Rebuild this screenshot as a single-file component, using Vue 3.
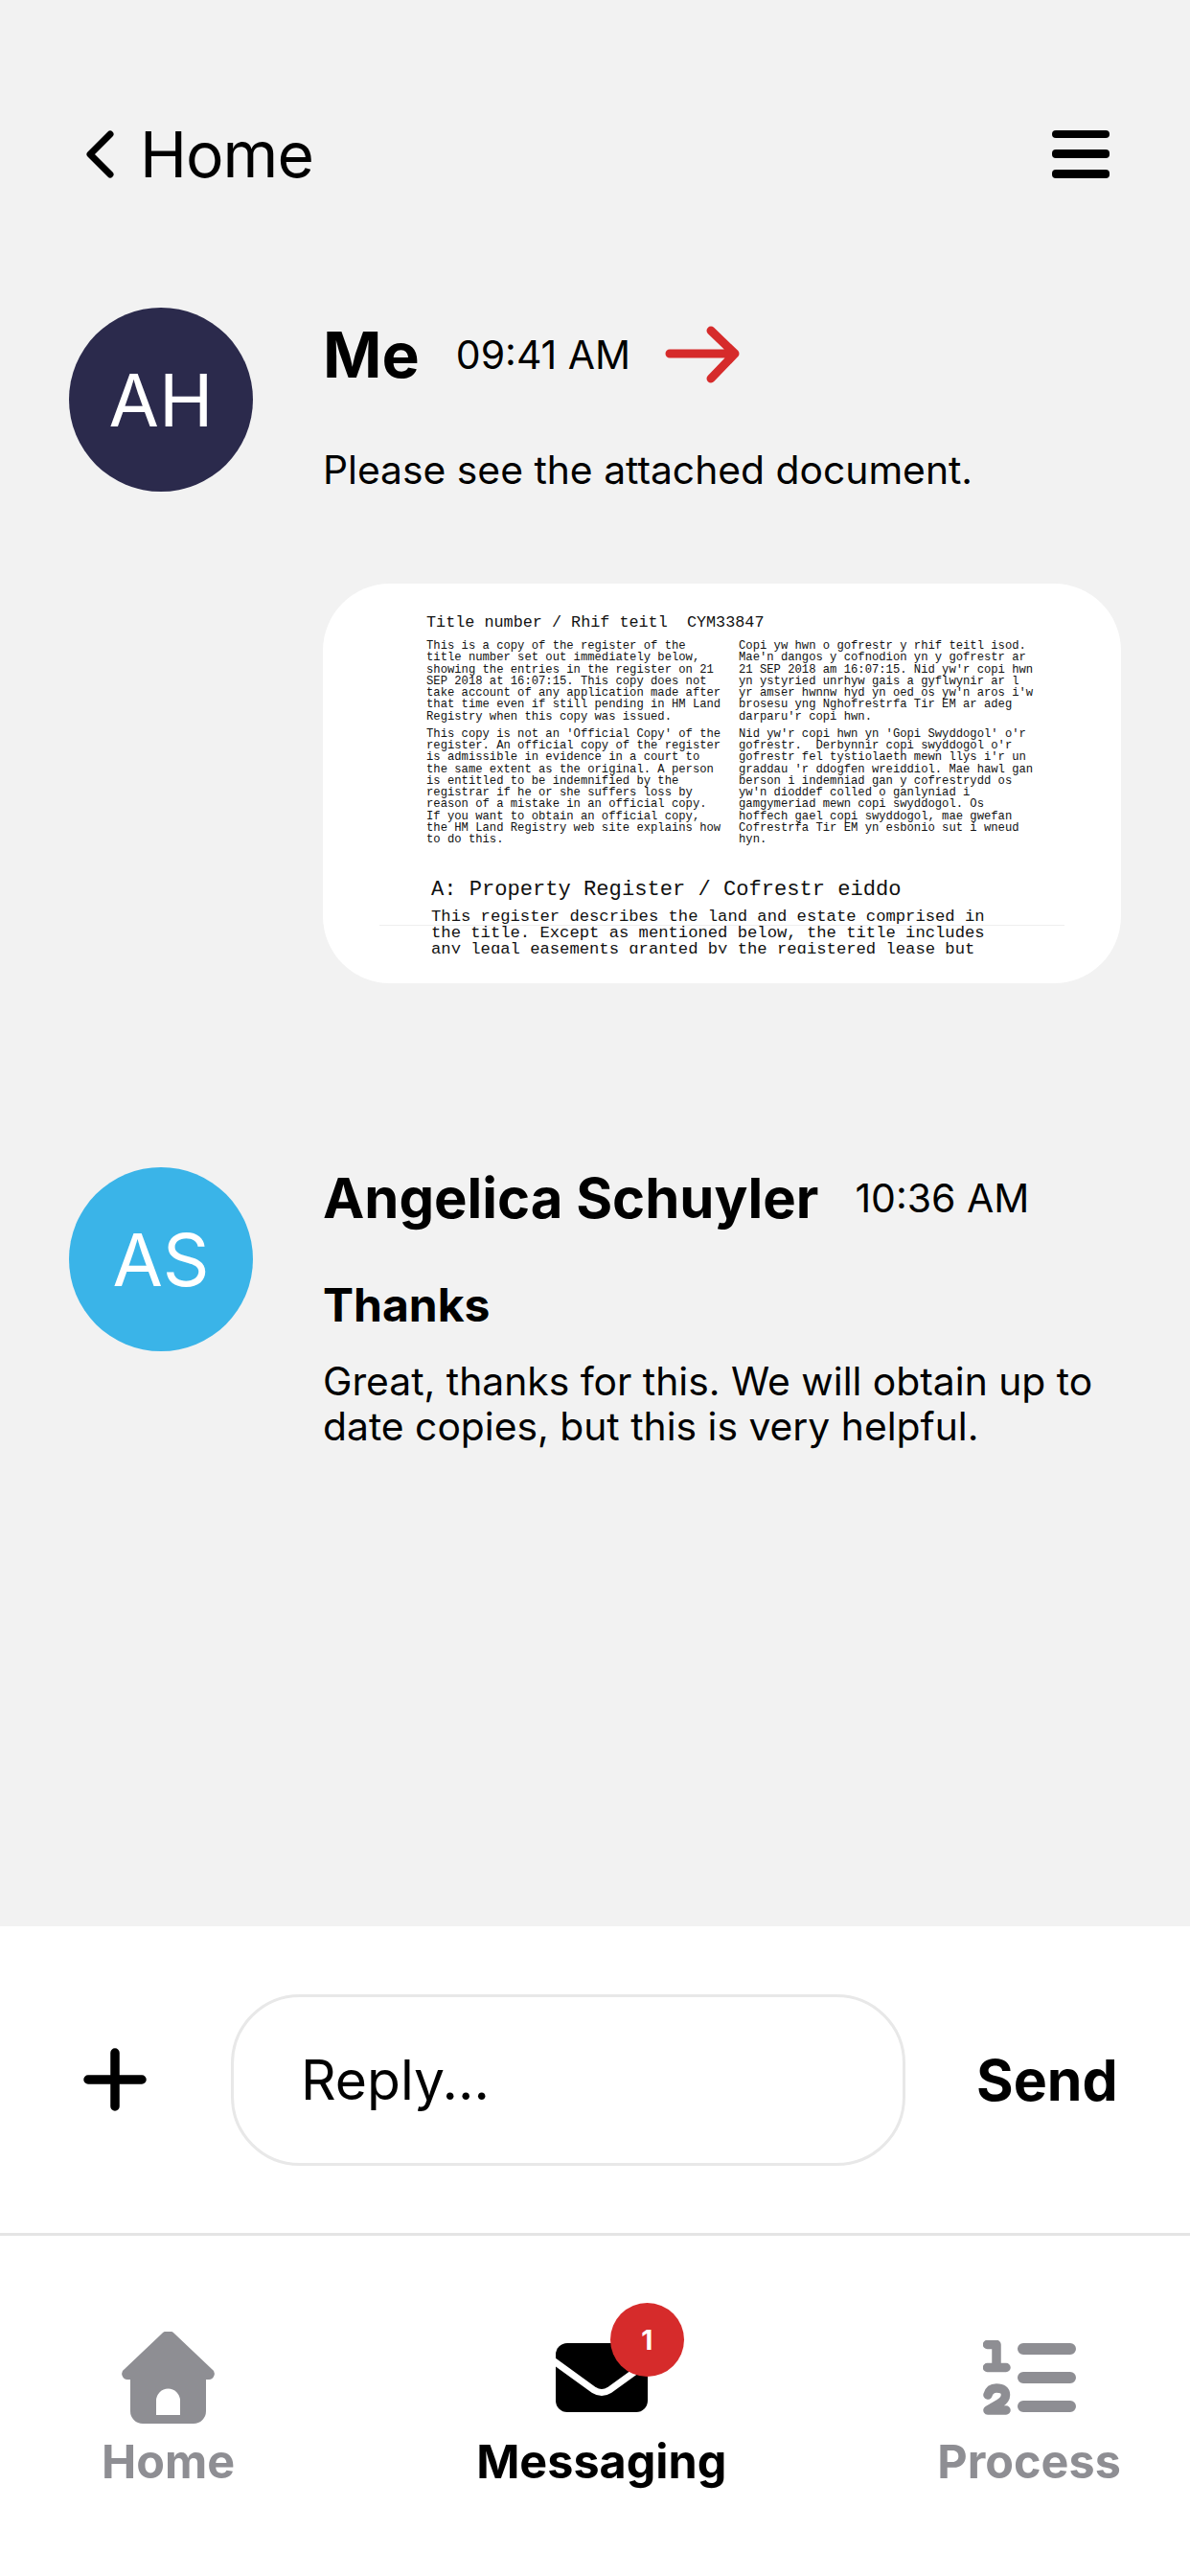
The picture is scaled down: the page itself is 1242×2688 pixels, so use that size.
<template>
  <div class="screen">
    <header class="topbar">
      <div class="back">
        <svg class="back__icon" viewBox="0 0 30 50" fill="none" stroke="currentColor" stroke-width="7" stroke-linecap="round" stroke-linejoin="round">
          <path d="M25 4 4 25l21 21" />
        </svg>
        <span>Home</span>
      </div>
      <svg class="menu" viewBox="0 0 60 50" fill="currentColor">
        <rect x="0" y="0" width="60" height="8" rx="4" />
        <rect x="0" y="20" width="60" height="9" rx="4" />
        <rect x="0" y="41" width="60" height="9" rx="4" />
      </svg>
    </header>

    <main class="messages">
      <article class="msg msg--me">
        <div class="avatar avatar--me">AH</div>
        <div class="msg__body">
          <div class="msg__head">
            <span class="msg__name msg__name--me">Me</span>
            <span class="msg__time">09:41 AM</span>
            <svg class="msg__arrow" viewBox="0 0 78 60" fill="none" stroke="currentColor" stroke-width="9" stroke-linecap="round" stroke-linejoin="round">
              <path d="M5 29h68M48 5l25 24-25 26" />
            </svg>
          </div>
          <p class="msg__text msg__text--first">Please see the attached document.</p>
          <div class="attachment">
            <div class="doc">
              <div class="doc__title">{{ docTitle }}</div>
              <div class="doc__cols">
                <div v-for="(col, i) in docColumns" :key="i" class="doc__col">
                  <div v-for="(para, j) in col" :key="j" class="doc__para">
                    <div v-for="line in para" :key="line">{{ line }}</div>
                  </div>
                </div>
              </div>
              <div class="doc__section">
                <div class="doc__heading">A: Property Register / Cofrestr eiddo</div>
                <div class="doc__big">
                  <div>This register describes the land and estate comprised in</div>
                  <div>the title. Except as mentioned below, the title includes</div>
                  <div>any legal easements granted by the registered lease but</div>
                </div>
              </div>
              <div class="doc__rule"></div>
            </div>
          </div>
        </div>
      </article>

      <article class="msg msg--them">
        <div class="avatar avatar--them">AS</div>
        <div class="msg__body">
          <div class="msg__head msg__head--them">
            <span class="msg__name">Angelica Schuyler</span>
            <span class="msg__time">10:36 AM</span>
          </div>
          <h3 class="msg__subject">Thanks</h3>
          <p class="msg__text">Great, thanks for this. We will obtain up to<br />date copies, but this is very helpful.</p>
        </div>
      </article>
    </main>

    <section class="composer">
      <svg class="composer__plus" viewBox="0 0 66 66" fill="none" stroke="currentColor" stroke-width="9.500" stroke-linecap="round">
        <path d="M33 5v56M5 33h56" />
      </svg>
      <div class="composer__input">Reply...</div>
      <span class="composer__send">Send</span>
    </section>

    <nav class="tabs">
      <div class="tab tab--home">
        <svg class="tab__icon tab__icon--home" viewBox="0 0 97 96" fill="currentColor" fill-rule="evenodd">
          <path d="M42 2a9 9 0 0 1 13 0l39 37a6 6 0 0 1-4 11h-2v33a13 13 0 0 1-13 13H22A13 13 0 0 1 9 83V50H7a6 6 0 0 1-4-11ZM36 87h25V72a12.500 12.500 0 0 0-25 0Z" />
        </svg>
        <span>Home</span>
      </div>
      <div class="tab tab--active tab--messaging">
        <div class="tab__envelope">
          <svg class="tab__icon tab__icon--mail" viewBox="0 0 96 72">
            <rect width="96" height="72" rx="12" fill="currentColor" />
            <path d="M-3 18 40 49q8 5 16 0L99 18" fill="none" stroke="#fff" stroke-width="7" />
          </svg>
          <span class="tab__badge">1</span>
        </div>
        <span>Messaging</span>
      </div>
      <div class="tab tab--process">
        <svg class="tab__icon tab__icon--process" viewBox="0 0 97 78" fill="none" stroke="currentColor" stroke-linecap="round" stroke-linejoin="round">
          <path d="M42 9h49M42 39h49M42 69h49" stroke-width="12" />
          <path d="M4.500 4.500H14v24M4.500 28.500H24" stroke-width="9.500" />
          <path d="M5 57q2-7 9-7 9.500 0 9.500 7 0 5-6.500 9L5 73h19" stroke-width="9.500" />
        </svg>
        <span>Process</span>
      </div>
    </nav>
  </div>
</template>

<script setup>
const docTitle = 'Title number / Rhif teitl  CYM33847'

const docColumns = [
  [
    [
      'This is a copy of the register of the',
      'title number set out immediately below,',
      'showing the entries in the register on 21',
      'SEP 2018 at 16:07:15. This copy does not',
      'take account of any application made after',
      'that time even if still pending in HM Land',
      'Registry when this copy was issued.',
    ],
    [
      "This copy is not an 'Official Copy' of the",
      'register. An official copy of the register',
      'is admissible in evidence in a court to',
      'the same extent as the original. A person',
      'is entitled to be indemnified by the',
      'registrar if he or she suffers loss by',
      'reason of a mistake in an official copy.',
      'If you want to obtain an official copy,',
      'the HM Land Registry web site explains how',
      'to do this.',
    ],
  ],
  [
    [
      'Copi yw hwn o gofrestr y rhif teitl isod.',
      "Mae'n dangos y cofnodion yn y gofrestr ar",
      "21 SEP 2018 am 16:07:15. Nid yw'r copi hwn",
      'yn ystyried unrhyw gais a gyflwynir ar l',
      "yr amser hwnnw hyd yn oed os yw'n aros i'w",
      'brosesu yng Nghofrestrfa Tir EM ar adeg',
      "darparu'r copi hwn.",
    ],
    [
      "Nid yw'r copi hwn yn 'Gopi Swyddogol' o'r",
      "gofrestr.  Derbynnir copi swyddogol o'r",
      "gofrestr fel tystiolaeth mewn llys i'r un",
      "graddau 'r ddogfen wreiddiol. Mae hawl gan",
      'berson i indemniad gan y cofrestrydd os',
      "yw'n dioddef colled o ganlyniad i",
      'gamgymeriad mewn copi swyddogol. Os',
      'hoffech gael copi swyddogol, mae gwefan',
      'Cofrestrfa Tir EM yn esbonio sut i wneud',
      'hyn.',
    ],
  ],
]
</script>

<style scoped>
.screen {
  width: 1242px;
  height: 2688px;
  display: flex;
  flex-direction: column;
  background: #f2f2f2;
  color: #000;
  font-family: Inter, "Liberation Sans", sans-serif;
  overflow: hidden;
}

.topbar {
  height: 321px;
  flex-shrink: 0;
  box-sizing: border-box;
  padding: 136px 84px 0 90px;
  display: flex;
  justify-content: space-between;
  align-items: flex-start;
}

.back {
  display: flex;
  align-items: center;
  gap: 26px;
  height: 50px;
  font-size: 66px;
  letter-spacing: -1px;
  line-height: 52px;
}

.back__icon {
  width: 30px;
  height: 50px;
}

.menu {
  width: 60px;
  height: 50px;
}

.messages {
  flex: 1;
  padding-left: 72px;
}

.msg {
  display: flex;
  gap: 73px;
}

.msg--them {
  margin-top: 192px;
}

.avatar {
  width: 192px;
  height: 192px;
  flex-shrink: 0;
  border-radius: 50%;
  display: flex;
  align-items: center;
  justify-content: center;
  color: #fff;
  font-size: 76px;
}

.avatar--me {
  background: #2b2a4c;
}

.avatar--them {
  background: #3ab4e8;
}

.msg__body {
  padding-top: 9px;
}

.msg__head {
  display: flex;
  align-items: center;
  height: 80px;
}

.msg__head--them {
  margin-top: -17px;
}

.msg__name {
  font-size: 58px;
  font-weight: 700;
}

.msg__name--me {
  font-size: 66px;
}

.msg__time {
  margin-left: 38px;
  font-size: 41px;
}

.msg__arrow {
  width: 78px;
  height: 60px;
  margin-left: 36px;
  color: #d62b2b;
}

.msg__text {
  margin: 0;
  font-size: 40.8px;
  line-height: 47px;
}

.msg__text--first {
  margin-top: 57px;
}

.msg__subject {
  margin: 44px 0 28px;
  font-size: 48px;
  line-height: 56px;
  font-weight: 700;
}

.attachment {
  width: 833px;
  height: 417px;
  margin-top: 95px;
  border-radius: 70px;
  background: #fff;
}

.doc {
  position: relative;
  height: 386px;
  box-sizing: border-box;
  padding: 31px 0 0 108px;
  overflow: hidden;
  color: #111;
  font-family: "Liberation Mono", monospace;
  white-space: pre;
}

.doc__title {
  font-size: 16.8px;
  line-height: 20px;
}

.doc__cols {
  display: flex;
  margin-top: 8px;
  font-size: 12.2px;
  line-height: 12.27px;
}

.doc__col {
  width: 326px;
}

.doc__para + .doc__para {
  margin-top: 6px;
}

.doc__section {
  margin: 33px 0 0 5px;
}

.doc__heading {
  font-size: 22.1px;
  line-height: 26px;
}

.doc__big {
  margin-top: 6px;
  font-size: 17.2px;
  line-height: 17.3px;
}

.doc__rule {
  position: absolute;
  left: 59px;
  right: 59px;
  top: 356px;
  height: 1px;
  background: #eee;
}

.composer {
  height: 323px;
  flex-shrink: 0;
  box-sizing: border-box;
  padding-left: 87px;
  display: flex;
  align-items: center;
  background: #fff;
  border-bottom: 3px solid #e5e5e5;
}

.composer__plus {
  width: 66px;
  height: 66px;
  flex-shrink: 0;
}

.composer__input {
  width: 704px;
  height: 179px;
  flex-shrink: 0;
  box-sizing: border-box;
  margin-left: 88px;
  padding-left: 70px;
  display: flex;
  align-items: center;
  border: 3px solid #e8e8e8;
  border-radius: 72px;
  font-size: 57px;
}

.composer__send {
  margin-left: 74px;
  font-size: 59px;
  font-weight: 700;
  white-space: nowrap;
}

.tabs {
  height: 355px;
  flex-shrink: 0;
  box-sizing: border-box;
  padding-left: 106px;
  display: flex;
  background: #fff;
}

.tab {
  display: flex;
  flex-direction: column;
  align-items: center;
  height: 264px;
  justify-content: flex-end;
  color: #8e8e93;
  font-size: 48.5px;
  font-weight: 700;
  line-height: 57px;
}

.tab--active {
  color: #000;
}

.tab--messaging {
  margin-left: 252px;
}

.tab--process {
  margin-left: 220px;
}

.tab__icon {
  display: block;
}

.tab__icon--home {
  width: 97px;
  height: 96px;
  margin-bottom: 11px;
}

.tab__envelope {
  position: relative;
  margin-bottom: 23px;
}

.tab__icon--mail {
  width: 96px;
  height: 72px;
}

.tab__badge {
  position: absolute;
  top: -42px;
  left: 57px;
  width: 77px;
  height: 77px;
  border-radius: 50%;
  display: flex;
  align-items: center;
  justify-content: center;
  background: #d62b2b;
  color: #fff;
  font-size: 28px;
  font-weight: 700;
  line-height: 1;
}

.tab__icon--process {
  width: 97px;
  height: 78px;
  margin-bottom: 20px;
}
</style>
